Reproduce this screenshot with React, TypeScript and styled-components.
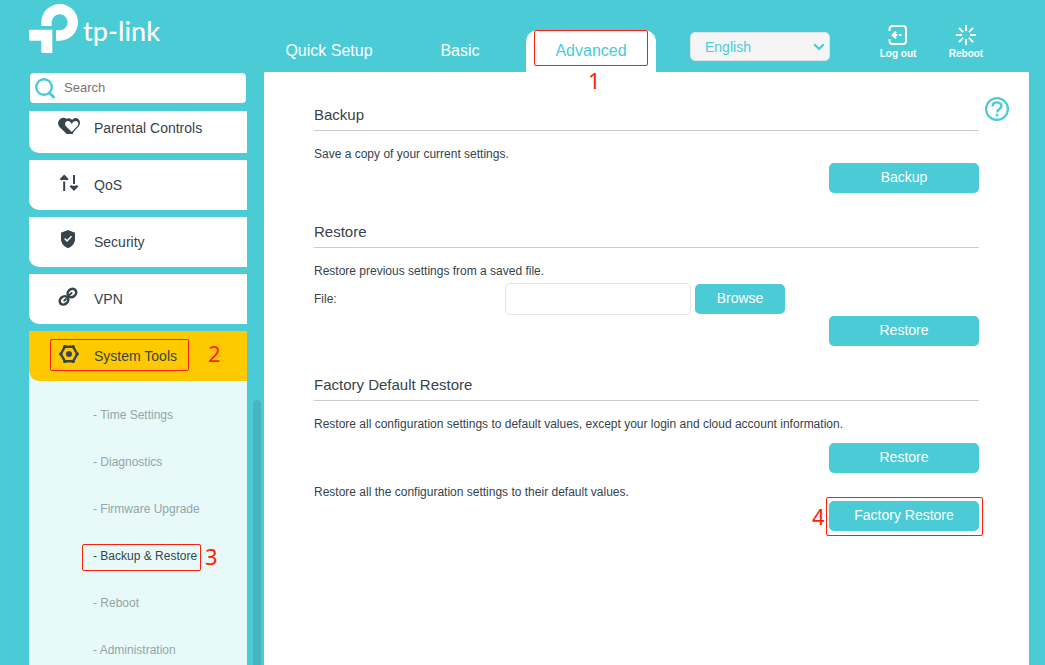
import React from "react";
import styled, { createGlobalStyle, css } from "styled-components";

const teal = "#4acbd6";
const ink = "#36444b";
const red = "#ff1e0a";

const GlobalStyle = createGlobalStyle`
  *, *::before, *::after { box-sizing: border-box; }
  body {
    margin: 0;
    background: ${teal};
    color: ${ink};
    font-family: "Liberation Sans", Arial, sans-serif;
    font-size: 12px;
  }
  a { color: inherit; text-decoration: none; }
  h2, p, ul { margin: 0; padding: 0; }
  ul { list-style: none; }
  button, input, select { font-family: inherit; }
`;

const Page = styled.div`
  display: flex;
  flex-direction: column;
  height: 100vh;
  overflow: hidden;
`;

const Header = styled.header`
  display: flex;
  flex: none;
  height: 72px;
  padding: 0 45px 0 29px;
`;

const Brand = styled.a`
  display: flex;
  flex: none;
  align-items: flex-start;
  gap: 4px;
  width: 235px;
  padding-top: 4px;
  color: #fff;
`;

const Wordmark = styled.span`
  padding-top: 10px;
  font-family: Lato, sans-serif;
  font-size: 27px;
  font-weight: 500;
  line-height: 34px;
`;

const Nav = styled.nav`
  display: flex;
  align-items: flex-end;
  gap: 1px;
`;

const Tab = styled.a<{ $active?: boolean }>`
  position: relative;
  width: 130px;
  height: 42px;
  border-radius: 12px 12px 0 0;
  font-size: 16px;
  line-height: 42px;
  text-align: center;
  color: ${(p) => (p.$active ? teal : "#fff")};
  background: ${(p) => (p.$active ? "#fff" : "transparent")};
`;

const Tools = styled.div`
  display: flex;
  align-items: flex-start;
  margin-left: auto;
`;

const SelectWrap = styled.label`
  display: grid;
  align-items: center;
  width: 140px;
  margin: 32px 34px 0 0;
  > * { grid-area: 1 / 1; }
  > svg { justify-self: end; margin-right: 5px; pointer-events: none; }
`;

const Select = styled.select`
  appearance: none;
  width: 100%;
  height: 29px;
  padding: 0 24px 0 14px;
  border: 1px solid #dde3e4;
  border-radius: 5px;
  background: #f5f5f5;
  color: ${teal};
  font-size: 14px;
`;

const Action = styled.button`
  display: flex;
  flex-direction: column;
  align-items: center;
  gap: 2px;
  width: 68px;
  padding: 25px 0 0;
  border: 0;
  background: none;
  color: #fff;
  font-size: 10px;
  font-weight: bold;
  line-height: 13px;
`;

const Body = styled.div`
  display: flex;
  flex: 1;
  min-height: 0;
  padding: 0 16px 0 29px;
`;

const Sidebar = styled.aside`
  display: flex;
  flex: none;
  flex-direction: column;
  width: 235px;
`;

const SearchBox = styled.label`
  display: flex;
  flex: none;
  align-items: center;
  gap: 8px;
  width: 216px;
  height: 30px;
  margin: 1px 1px 8px;
  padding-left: 5px;
  border-radius: 4px;
  background: #fff;
`;

const SearchInput = styled.input`
  flex: 1;
  min-width: 0;
  padding: 0 0 2px;
  border: 0;
  outline: 0;
  background: none;
  font-size: 13px;
  &::placeholder { color: #757575; opacity: 1; }
`;

const Scroller = styled.div`
  display: flex;
  flex: 1;
  min-height: 0;
  gap: 6px;
  overflow: hidden;
`;

const Menu = styled.ul`
  display: flex;
  flex-direction: column;
  gap: 7px;
  width: 218px;
  margin-top: -8px;
`;

const MenuItem = styled.li<{ $open?: boolean }>`
  flex: none;
  ${(p) => p.$open && css`background: #e8f9f9;`}
`;

const MenuLink = styled.a<{ $active?: boolean }>`
  position: relative;
  display: flex;
  align-items: center;
  gap: 14px;
  height: 50px;
  padding-left: 29px;
  border-radius: 0 0 0 10px;
  background: ${(p) => (p.$active ? "#ffc900" : "#fff")};
  font-size: 14px;
  > svg { margin-bottom: 4px; }
`;

const Submenu = styled.ul`
  padding: 11px 0 10px;
`;

const SubLink = styled.a<{ $active?: boolean }>`
  position: relative;
  display: block;
  height: 47px;
  padding-left: 64px;
  line-height: 47px;
  color: ${(p) => (p.$active ? ink : "#93a5a8")};
`;

const ScrollThumb = styled.div`
  width: 8px;
  margin-top: 289px;
  border-radius: 4px 4px 0 0;
  background: #48b4c0;
`;

const Content = styled.main`
  display: grid;
  flex: 1;
  grid-template-columns: 1fr 50px;
  padding: 29px 0 0 50px;
  background: #fff;
`;

const Sections = styled.div`
  display: flex;
  flex-direction: column;
  gap: 25px;
`;

const Section = styled.section`
  display: flex;
  flex-direction: column;
`;

const Title = styled.h2`
  margin-bottom: 14px;
  padding-bottom: 2px;
  border-bottom: 1px solid #ccc;
  font-size: 15px;
  font-weight: normal;
  line-height: 27px;
`;

const Text = styled.p<{ $spaced?: boolean }>`
  margin-top: ${(p) => (p.$spaced ? 10 : 0)}px;
  line-height: 18px;
`;

const Button = styled.button<{ $small?: boolean }>`
  width: ${(p) => (p.$small ? 90 : 150)}px;
  height: 30px;
  padding: 0 0 2px;
  border: 0;
  border-radius: 5px;
  background: ${teal};
  color: #fff;
  font-size: 14px;
`;

const ButtonRow = styled.div<{ $gap?: number }>`
  position: relative;
  align-self: flex-end;
  display: flex;
  margin-top: ${(p) => p.$gap ?? 0}px;
`;

const FileRow = styled.div`
  display: flex;
  align-items: center;
  gap: 4px;
  margin-top: 3px;
`;

const FileLabel = styled.label`
  width: 187px;
`;

const FileInput = styled.input`
  width: 186px;
  height: 32px;
  border: 1px solid #e4e4e4;
  border-radius: 5px;
  background: #fff;
`;

const HelpButton = styled.button`
  display: block;
  align-self: start;
  width: 24px;
  height: 24px;
  margin: -4px 0 0 6px;
  padding: 0;
  border: 0;
  background: none;
  color: ${teal};
`;

const Outline = styled.span<{ $x: number; $y: number; $w: number; $h: number }>`
  position: absolute;
  left: ${(p) => p.$x}px;
  top: ${(p) => p.$y}px;
  width: ${(p) => p.$w}px;
  height: ${(p) => p.$h}px;
  border: 1px solid ${red};
  border-radius: 2px;
  pointer-events: none;
`;

const Step = styled.span<{ $x: number; $y: number }>`
  position: absolute;
  left: ${(p) => p.$x}px;
  top: ${(p) => p.$y}px;
  color: ${red};
  font-family: "Noto Sans", sans-serif;
  font-size: 22px;
  line-height: 24px;
  pointer-events: none;
`;

const LogoMark = () => (
  <svg width="50" height="49" viewBox="27 12 150 147" fill="currentColor" aria-hidden="true">
    <path d="M64 78V67A55 55 0 1 1 119 122H108V91H119A24 24 0 1 0 95 67V78Z" />
    <path d="M31 89H97V159H68a4 4 0 0 1-4-4V122H31a4 4 0 0 1-4-4V93a4 4 0 0 1 4-4Z" />
  </svg>
);

const SearchIcon = () => (
  <svg width="21" height="21" viewBox="0 0 21 21" fill="none" stroke={teal} strokeWidth="2.4" aria-hidden="true">
    <circle cx="9" cy="9" r="7.800" />
    <path d="M14.500 15L18.500 19" strokeWidth="3" strokeLinecap="round" />
  </svg>
);

const ChevronIcon = () => (
  <svg width="12" height="8" viewBox="0 0 12 8" fill="none" stroke={teal} strokeWidth="2.200" aria-hidden="true">
    <path d="M1.200 1.200L6 6l4.800-4.800" />
  </svg>
);

const LogoutIcon = () => (
  <svg width="20" height="20" viewBox="0 0 20 20" fill="none" stroke="currentColor" strokeWidth="2" aria-hidden="true">
    <path d="M1.500 6V4a3 3 0 0 1 3-3h10.500a3 3 0 0 1 3 3v12a3 3 0 0 1-3 3H4.500a3 3 0 0 1-3-3V14" />
    <path d="M6 10h3.500M11 10h2.500" />
    <path d="M3.200 10L7.200 6 8.800 7.600 7 10 8.800 12.400 7.200 14Z" fill="currentColor" stroke="none" />
  </svg>
);

const RebootIcon = () => (
  <svg width="20" height="20" viewBox="0 0 20 20" fill="none" stroke="currentColor" strokeWidth="2" aria-hidden="true">
    <path d="M10 0v6M10 14v6M0 10h6M14 10h6M2.900 2.900l4.200 4.200M12.900 12.900l4.200 4.200M2.900 17.100l4.200-4.200M12.900 7.100l4.200-4.200" />
  </svg>
);

const HelpIcon = () => (
  <svg width="24" height="24" viewBox="0 0 24 24" fill="none" stroke="currentColor" strokeWidth="2.200" aria-hidden="true">
    <circle cx="12" cy="12" r="10.900" />
    <path d="M7.600 9.400C7.600 6.800 9.500 5.400 12 5.400s4.500 1.500 4.500 3.700c0 2.900-4.400 2.900-4.400 6.300" strokeWidth="2.400" />
    <path d="M10.800 16.800h2.600v2.600h-2.600z" fill="currentColor" stroke="none" />
  </svg>
);

const MenuIcon = ({ children }: { children: React.ReactNode }) => (
  <svg width="22" height="20" viewBox="0 0 22 20" fill={ink} aria-hidden="true">
    {children}
  </svg>
);

const HeartsIcon = () => (
  <MenuIcon>
    <path d="M9.500 4C8 1.500 4.500 1.200 2.200 3-.3 5-.6 8.500 1.500 11L8.800 18H15L16 5Z" />
    <path d="M14 4.200C15.500 1.500 18.500 1.300 20.500 3.200 22.500 5.200 22.400 8.500 20.500 10.500L13.500 18H10L6 8 8 3.800C10 1.500 12.800 2 14 4.200Z" />
    <path
      d="M13.700 8.200C14.500 5.500 17.500 4.200 19.200 5.400 20.700 6.500 20.700 8.500 19.400 10L13.700 15.900 8 10.200C6.700 8.700 6.800 6.700 8.200 5.600 10 4.300 12.800 5.500 13.700 8.200Z"
      fill="#fff"
    />
  </MenuIcon>
);

const QosIcon = () => (
  <MenuIcon>
    <path d="M1.800 6L6.200 1.500 10.600 6 9 7.600 6.200 5.600 3.400 7.600ZM5.200 8.500h2V18h-2zM15 2h2v9h-2zM11.600 13.500L13.200 12 16 14.200 18.800 12 20.400 13.500 16 18Z" />
    <path d="M3.500 5.500h5.400v1.500H3.500zM13.300 12.800h5.400v1.500h-5.400z" />
  </MenuIcon>
);

const ShieldIcon = () => (
  <MenuIcon>
    <path d="M10 0l7 2.700V9c0 4.300-3 7.700-7 9.300C6 16.700 3 13.300 3 9V2.700Z" />
    <path d="M6.700 8.600l2.400 2.300 4.400-4.600" fill="none" stroke="#fff" strokeWidth="1.500" />
  </MenuIcon>
);

const ChainIcon = () => (
  <MenuIcon>
    <g fill="none" stroke={ink} strokeWidth="2.600">
      <ellipse cx="6" cy="13.400" rx="4.600" ry="3.800" transform="rotate(-40 6 13.400)" />
      <ellipse cx="13.900" cy="6" rx="4.600" ry="3.800" transform="rotate(-40 13.900 6)" />
      <path d="M6.300 13.600L8 12M12 7.600L13.600 6.100" strokeWidth="2" strokeLinecap="round" />
    </g>
  </MenuIcon>
);

const GearIcon = () => (
  <MenuIcon>
    <path d="M6.800 2.800H15.200L19.200 10 15.200 17.200H6.800L2.800 10Z" fill="none" stroke={ink} strokeWidth="2.400" strokeLinejoin="round" />
    <g>
      <circle cx="6.800" cy="2.600" r="1.700" />
      <circle cx="15.200" cy="2.600" r="1.700" />
      <circle cx="19.200" cy="10" r="1.700" />
      <circle cx="15.200" cy="17.400" r="1.700" />
      <circle cx="6.800" cy="17.400" r="1.700" />
      <circle cx="2.800" cy="10" r="1.700" />
      <circle cx="11" cy="10" r="3" />
    </g>
  </MenuIcon>
);

const menu = [
  { label: "Parental Controls", Icon: HeartsIcon },
  { label: "QoS", Icon: QosIcon },
  { label: "Security", Icon: ShieldIcon },
  { label: "VPN", Icon: ChainIcon },
];

const systemTools = [
  "Time Settings",
  "Diagnostics",
  "Firmware Upgrade",
  "Backup & Restore",
  "Reboot",
  "Administration",
];

export default function App() {
  return (
    <Page>
      <GlobalStyle />
      <Header>
        <Brand href="#">
          <LogoMark />
          <Wordmark>tp-link</Wordmark>
        </Brand>
        <Nav>
          <Tab href="#quick">Quick Setup</Tab>
          <Tab href="#basic">Basic</Tab>
          <Tab href="#advanced" $active>
            Advanced
            <Outline $x={8} $y={0} $w={114} $h={36} />
            <Step $x={62} $y={38}>1</Step>
          </Tab>
        </Nav>
        <Tools>
          <SelectWrap>
            <Select aria-label="Language" defaultValue="English">
              <option>English</option>
            </Select>
            <ChevronIcon />
          </SelectWrap>
          <Action type="button">
            <LogoutIcon />
            Log out
          </Action>
          <Action type="button">
            <RebootIcon />
            Reboot
          </Action>
        </Tools>
      </Header>
      <Body>
        <Sidebar>
          <SearchBox>
            <SearchIcon />
            <SearchInput type="text" placeholder="Search" aria-label="Search" />
          </SearchBox>
          <Scroller>
            <Menu>
              {menu.map(({ label, Icon }) => (
                <MenuItem key={label}>
                  <MenuLink href="#">
                    <Icon />
                    {label}
                  </MenuLink>
                </MenuItem>
              ))}
              <MenuItem $open>
                <MenuLink href="#" $active>
                  <GearIcon />
                  System Tools
                  <Outline $x={21} $y={8} $w={139} $h={32} />
                  <Step $x={179} $y={10}>2</Step>
                </MenuLink>
                <Submenu>
                  {systemTools.map((label) => {
                    const active = label === "Backup & Restore";
                    return (
                      <li key={label}>
                        <SubLink href="#" $active={active}>
                          - {label}
                          {active && (
                            <>
                              <Outline $x={53} $y={11} $w={119} $h={27} />
                              <Step $x={176} $y={11}>3</Step>
                            </>
                          )}
                        </SubLink>
                      </li>
                    );
                  })}
                </Submenu>
              </MenuItem>
            </Menu>
            <ScrollThumb />
          </Scroller>
        </Sidebar>
        <Content>
          <Sections>
            <Section>
              <Title>Backup</Title>
              <Text>Save a copy of your current settings.</Text>
              <ButtonRow>
                <Button type="button">Backup</Button>
              </ButtonRow>
            </Section>
            <Section>
              <Title>Restore</Title>
              <Text>Restore previous settings from a saved file.</Text>
              <FileRow>
                <FileLabel htmlFor="file">File:</FileLabel>
                <FileInput id="file" type="text" />
                <Button type="button" $small>Browse</Button>
              </FileRow>
              <ButtonRow $gap={1}>
                <Button type="button">Restore</Button>
              </ButtonRow>
            </Section>
            <Section>
              <Title>Factory Default Restore</Title>
              <Text>
                Restore all configuration settings to default values, except your login and cloud
                account information.
              </Text>
              <ButtonRow $gap={10}>
                <Button type="button">Restore</Button>
              </ButtonRow>
              <Text $spaced>Restore all the configuration settings to their default values.</Text>
              <ButtonRow>
                <Button type="button">Factory Restore</Button>
                <Outline $x={-3} $y={-4} $w={157} $h={39} />
                <Step $x={-17} $y={3}>4</Step>
              </ButtonRow>
            </Section>
          </Sections>
          <HelpButton type="button" aria-label="Help">
            <HelpIcon />
          </HelpButton>
        </Content>
      </Body>
    </Page>
  );
}
